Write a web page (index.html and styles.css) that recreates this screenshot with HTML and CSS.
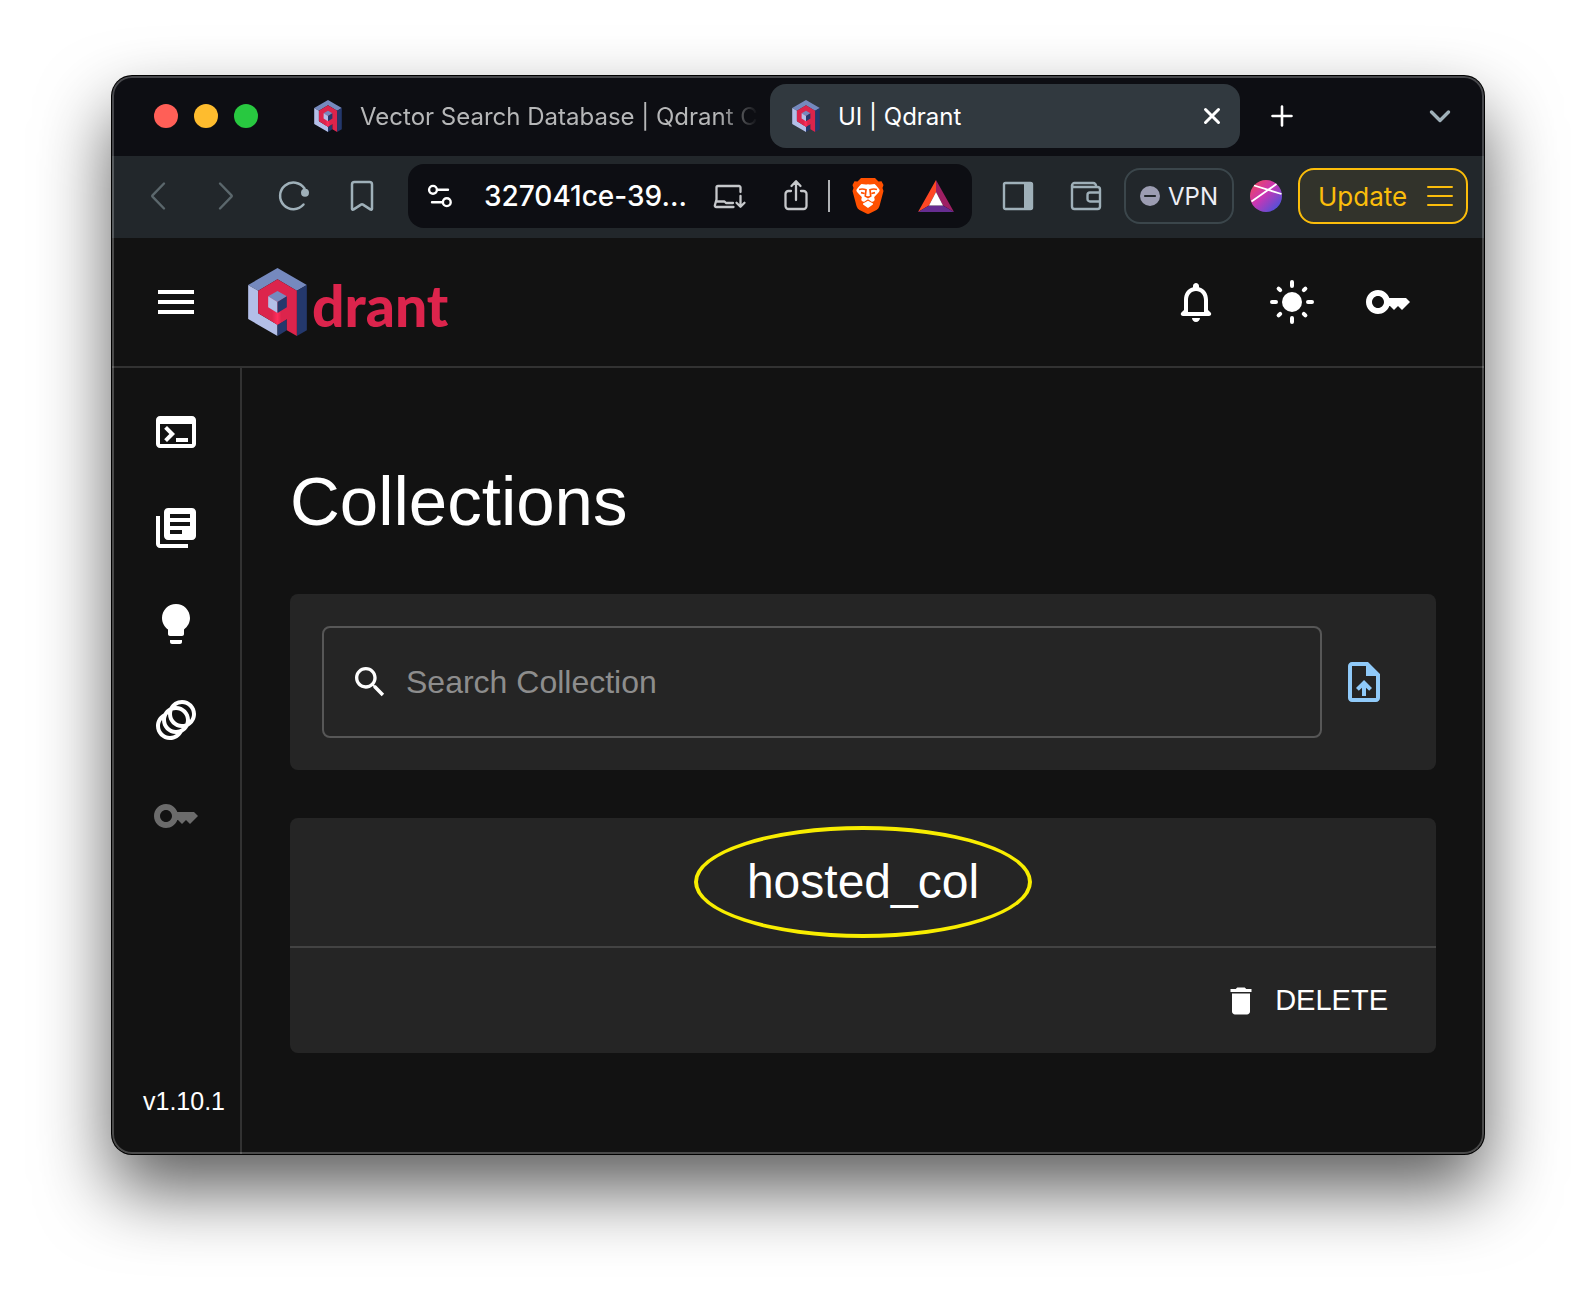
FILE: index.html
```html
<!DOCTYPE html>
<html lang="en">
<head>
<meta charset="utf-8">
<title>UI | Qdrant</title>
<link rel="stylesheet" href="styles.css">
</head>
<body>
<svg class="defs" aria-hidden="true">
  <defs>
    <linearGradient id="glow" x1="0" x2="1" y1="0" y2="0">
      <stop offset="0.2" stop-color="#dc244c"/>
      <stop offset="0.5" stop-color="#ff2e5c"/>
      <stop offset="0.7" stop-color="#dc244c"/>
    </linearGradient>
    <linearGradient id="orb" x1="0" x2="1" y1="0" y2="1">
      <stop offset="0.05" stop-color="#f0475c"/>
      <stop offset="0.45" stop-color="#c936b4"/>
      <stop offset="0.95" stop-color="#3b56e0"/>
    </linearGradient>
    <symbol id="cube" viewBox="0 0 176 204">
      <path fill="#7589be" d="M88 0 176 51 146 68 88 34 30 68 0 51z"/>
      <path fill="#b3bfe8" d="M0 51 30 68V136L88 170V204L0 153z"/>
      <path fill="#24386c" d="M176 51V187L146 204V68z"/>
      <path fill="#24386c" d="M88 170 116 153V187L88 204z"/>
      <path fill="#dc244c" d="M88 34 146 68V204L116 187V153L88 170 30 136V68z"/>
      <path fill="url(#glow)" d="M60 118 88 135 116 118V153L88 170 60 153z"/>
      <path fill="#7589be" d="M88 69 116 85 88 102 60 85z"/>
      <path fill="#b3bfe8" d="M60 85 88 102V135L60 118z"/>
      <path fill="#24386c" d="M116 85 88 102V135L116 118z"/>
    </symbol>
    <symbol id="key" viewBox="0 0 24 24">
      <path d="M21 10h-8.35C11.83 7.67 9.61 6 7 6c-3.31 0-6 2.69-6 6s2.69 6 6 6c2.61 0 4.83-1.67 5.65-4H13l2 2 2-2 2 2 4-4.04zM7 15c-1.65 0-3-1.35-3-3s1.35-3 3-3 3 1.35 3 3-1.35 3-3 3"/>
    </symbol>
  </defs>
</svg>

<div class="window">
  <div class="tabstrip">
    <div class="lights">
      <button class="light light-close" aria-label="Close window"></button>
      <button class="light light-min" aria-label="Minimize window"></button>
      <button class="light light-max" aria-label="Zoom window"></button>
    </div>
    <div class="tabs">
      <div class="tab">
        <svg class="favicon"><use href="#cube"/></svg>
        <span class="tab-title tab-title-fade">Vector Search Database | Qdrant C</span>
      </div>
      <div class="tab tab-active">
        <svg class="favicon"><use href="#cube"/></svg>
        <span class="tab-title">UI | Qdrant</span>
        <button class="tab-close" aria-label="Close tab">
          <svg width="32" height="32" viewBox="0 0 32 32" fill="none" stroke="#fff" stroke-width="3" stroke-linecap="round"><path d="M9.500 9.500 22.500 22.500M22.500 9.500 9.500 22.500"/></svg>
        </button>
      </div>
    </div>
    <button class="strip-button" aria-label="New tab">
      <svg width="32" height="32" viewBox="0 0 32 32" fill="none" stroke="#fff" stroke-width="2.600" stroke-linecap="round"><path d="M16 6.500v19M6.500 16h19"/></svg>
    </button>
    <button class="strip-button strip-end" aria-label="Search tabs">
      <svg width="32" height="32" viewBox="0 0 32 32" fill="none" stroke="#9fb0b9" stroke-width="3.400" stroke-linecap="round" stroke-linejoin="round"><path d="M7.500 12 16 20.500 24.500 12"/></svg>
    </button>
  </div>

  <div class="toolbar">
    <div class="nav">
      <button class="tool" aria-label="Back">
        <svg width="32" height="32" viewBox="0 0 32 32" fill="none" stroke="#5b676c" stroke-width="2.400" stroke-linecap="round" stroke-linejoin="round"><path d="M22 3.500 10.500 15.300a1 1 0 0 0 0 1.400L22 28.500"/></svg>
      </button>
      <button class="tool" aria-label="Forward">
        <svg width="32" height="32" viewBox="0 0 32 32" fill="none" stroke="#5b676c" stroke-width="2.400" stroke-linecap="round" stroke-linejoin="round"><path d="M10 3.500 21.500 15.300a1 1 0 0 1 0 1.400L10 28.500"/></svg>
      </button>
      <button class="tool" aria-label="Reload">
        <svg width="32" height="32" viewBox="0 0 32 32" fill="none" stroke="#9fb0b9" stroke-width="2.500" stroke-linecap="round"><path d="M25.500 24.500A13.300 13.300 0 1 1 26.500 8.500"/><circle cx="27" cy="12.700" r="4" fill="#9fb0b9" stroke="none"/></svg>
      </button>
      <button class="tool" aria-label="Bookmark this page">
        <svg width="32" height="32" viewBox="0 0 32 32" fill="none" stroke="#9fb0b9" stroke-width="2.500" stroke-linejoin="round"><path d="M6 4.500a2.400 2.400 0 0 1 2.400-2.400h15.200A2.400 2.400 0 0 1 26 4.500V29a.8.8 0 0 1-1.300.6L17 24.600a1.800 1.800 0 0 0-2 0L7.300 29.600A.8.8 0 0 1 6 29z"/></svg>
      </button>
    </div>

    <div class="address">
      <button class="tool" aria-label="Site settings">
        <svg width="32" height="32" viewBox="0 0 32 32" fill="none" stroke="#fff" stroke-width="2.400" stroke-linecap="round"><circle cx="9" cy="9.800" r="3.900"/><path d="M13.500 9.800H24M8 22.200h10"/><circle cx="22.800" cy="22.200" r="3.900"/></svg>
      </button>
      <input class="url" type="text" aria-label="Address" value="327041ce-39..." readonly>
      <button class="tool" aria-label="Install app">
        <svg width="32" height="32" viewBox="0 0 32 32" fill="none" stroke="#c6c8cb" stroke-width="2.300" stroke-linejoin="round" stroke-linecap="round"><path d="M2.500 19.500V7.500A1.500 1.500 0 0 1 4 6h21A1.500 1.500 0 0 1 26.500 7.500V12M2.500 19.500 .8 25.500a1.300 1.300 0 0 0 1.300 1.500H19.500M2.500 21.500h8l1.500 1.500h7M26.500 16v10.500M22.500 22.700l4 4 4-4"/></svg>
      </button>
      <button class="tool tool-share" aria-label="Share">
        <svg width="32" height="32" viewBox="0 0 32 32" fill="none" stroke="#c6c8cb" stroke-width="2.300" stroke-linejoin="round" stroke-linecap="round"><path d="M11 11H8.500a3 3 0 0 0-3 3v12a3 3 0 0 0 3 3h15a3 3 0 0 0 3-3V14a3 3 0 0 0-3-3H21M16 20V1.500M11.500 6 16 1.200 20.500 6"/></svg>
      </button>
      <div class="shields">
        <button class="tool" aria-label="Brave Shields">
          <svg width="32" height="36" viewBox="0 0 32 36"><path fill="#ff5000" d="M9 0h14l3.500 3.500 3-.3L31.500 7l-1 3 1 3-4 15c-.6 2-1.700 3-3 4L17.500 35.600a3 3 0 0 1-3 0L7.500 32c-1.300-1-2.400-2-3-4L.5 13l1-3-1-3 2-3.800 3 .3z"/><path fill="#fff" d="M9.500 6c2 .2 4 .9 6.500.2 2.500.7 4.500 0 6.500-.2 1.500 1 3.500 3.500 5 5.800.3 1-.3 1.900-1 2.700l-4 4.200c-.5.7-.3 1.300.1 2.100.2 1-.1 1.900-.9 2.500-.8.5-1.600.5-2.400.1L16.500 21.500h-1l-2.800 1.900c-.8.4-1.600.4-2.400-.1-.8-.6-1.100-1.500-.9-2.500.4-.8.600-1.400.1-2.100l-4-4.200c-.7-.8-1.300-1.700-1-2.700C6 9.500 8 7 9.500 6zM16 22.800l5 2.800c.2.500 0 .8-.4 1.100L16 30l-4.600-3.300c-.4-.3-.6-.6-.4-1.100z"/><path fill="none" stroke="#ff5000" stroke-width="1.700" d="M7 11.500c2.500-.8 4.800-.6 7 .3l-.7 6.200L16 19.500l2.700-1.500-.7-6.200c2.200-.9 4.500-1.100 7-.3M9 14.700l3.500.8M23 14.700l-3.500.8"/></svg>
        </button>
        <button class="tool" aria-label="Brave Rewards">
          <svg width="36" height="32" viewBox="0 0 36 32"><path fill="#ff4724" d="M18 0v12L11 25.500 0 32z"/><path fill="#9e1f63" d="M18 0v12l7 13.500L36 32z"/><path fill="#662d91" d="M0 32 11 25.500h14L36 32z"/><path fill="#fff" d="M18 12l7 13.500H11z"/></svg>
        </button>
      </div>
    </div>

    <div class="side-tools">
      <button class="tool" aria-label="Show sidebar">
        <svg width="32" height="32" viewBox="0 0 32 32"><rect x="2" y="3" width="28" height="26" rx="1.500" fill="none" stroke="#9fb0b9" stroke-width="2.400"/><path fill="#9fb0b9" d="M22 3h8v26h-8z"/></svg>
      </button>
      <button class="tool" aria-label="Wallet">
        <svg width="32" height="32" viewBox="0 0 32 32" fill="none" stroke="#9fb0b9" stroke-width="2.400" stroke-linejoin="round"><path d="M30 12.500V9.500A2.500 2.500 0 0 0 27.500 7H4.500A2.500 2.500 0 0 1 2 5.500 2.500 2.500 0 0 1 4.500 3H23a3 3 0 0 1 3 3.500M2 5v21.500A2.500 2.500 0 0 0 4.500 29h23a2.500 2.500 0 0 0 2.500-2.500V12.500H20a2.500 2.500 0 0 0-2.500 2.500v4a2.500 2.500 0 0 0 2.500 2.500h10"/></svg>
      </button>
    </div>
    <div class="account-tools">
      <button class="vpn">
        <svg width="20" height="20" viewBox="0 0 20 20"><circle cx="10" cy="10" r="10" fill="#9c9db2"/><path stroke="#22272b" stroke-width="2.200" stroke-linecap="round" d="M5 10h10"/></svg>
        VPN
      </button>
      <button class="tool" aria-label="Leo AI">
        <svg width="32" height="32" viewBox="0 0 32 32"><circle cx="16" cy="16" r="16" fill="url(#orb)"/><path stroke="#fff" stroke-width="1.800" d="M4 5.500 31.500 14M1.500 21.500 26.500 4"/></svg>
      </button>
      <button class="update">
        Update
        <svg width="28" height="20" viewBox="0 0 28 20" stroke="#fbbd0b" stroke-width="2" stroke-linecap="round"><path d="M2 1h24M2 10h24M2 19h24"/></svg>
      </button>
    </div>
  </div>

  <header class="app-header">
    <button class="icon-button" aria-label="Open menu">
      <svg class="icon" viewBox="0 0 24 24"><path d="M3 18h18v-2H3zm0-5h18v-2H3zm0-7v2h18V6z"/></svg>
    </button>
    <a class="logo" href="#">
      <svg class="logo-mark" aria-hidden="true"><use href="#cube"/></svg>
      <span class="logo-text">drant</span>
    </a>
    <div class="header-actions">
      <button class="icon-button" aria-label="Notifications">
        <svg class="icon" viewBox="0 0 24 24"><path d="M19.290 17.290 18 16v-5c0-3.070-1.640-5.640-4.500-6.320V4c0-.83-.67-1.500-1.500-1.500s-1.500.67-1.500 1.500v.68C7.630 5.360 6 7.920 6 11v5l-1.290 1.290c-.63.63-.19 1.710.7 1.710h13.170c.9 0 1.340-1.080.71-1.710M16 17H8v-6c0-2.480 1.510-4.500 4-4.500s4 2.020 4 4.500zm-4 5c1.100 0 2-.9 2-2h-4c0 1.100.89 2 2 2"/></svg>
      </button>
      <button class="icon-button" aria-label="Switch theme">
        <svg class="icon" viewBox="0 0 24 24"><circle cx="12" cy="12" r="5"/><path fill="none" stroke="#fff" stroke-width="2" stroke-linecap="round" d="M2 12h2M20 12h2M12 2v2M12 20v2M5.300 5.300l.8.8M17.900 17.900l.8.8M18.700 5.300l-.8.8M6.100 17.900l-.8.8"/></svg>
      </button>
      <button class="icon-button" aria-label="API key">
        <svg class="icon"><use href="#key"/></svg>
      </button>
    </div>
  </header>

  <div class="app-body">
    <nav class="sidebar">
      <a href="#" aria-label="Console"><svg class="icon" viewBox="0 0 24 24"><path d="M20 4H4c-1.110 0-2 .9-2 2v12c0 1.100.89 2 2 2h16c1.100 0 2-.9 2-2V6c0-1.100-.89-2-2-2m0 14H4V8h16zm-2-1h-6v-2h6zM7.500 17l-1.410-1.410L8.670 13l-2.590-2.590L7.500 9l4 4z"/></svg></a>
      <a href="#" aria-label="Collections"><svg class="icon" viewBox="0 0 24 24"><path d="M4 6H2v14c0 1.100.9 2 2 2h14v-2H4zm16-4H8c-1.100 0-2 .9-2 2v12c0 1.100.9 2 2 2h12c1.100 0 2-.9 2-2V4c0-1.100-.9-2-2-2m-1 9H9V9h10zm-4 4H9v-2h6zm4-8H9V5h10z"/></svg></a>
      <a href="#" aria-label="Tutorial"><svg class="icon" viewBox="0 0 24 24"><path d="M9 21c0 .5.4 1 1 1h4c.6 0 1-.5 1-1v-1H9zm3-19C8.100 2 5 5.100 5 9c0 2.400 1.200 4.500 3 5.700V17c0 .5.4 1 1 1h6c.6 0 1-.5 1-1v-2.300c1.800-1.300 3-3.400 3-5.700 0-3.900-3.100-7-7-7"/></svg></a>
      <a href="#" aria-label="Datasets"><svg class="icon" viewBox="0 0 24 24"><path d="M15 2c-2.710 0-5.050 1.540-6.220 3.780-1.280.67-2.340 1.720-3 3C3.540 9.950 2 12.290 2 15c0 3.870 3.130 7 7 7 2.710 0 5.050-1.540 6.220-3.780 1.280-.67 2.340-1.720 3-3C20.460 14.050 22 11.710 22 9c0-3.870-3.130-7-7-7M9 20c-2.760 0-5-2.240-5-5 0-1.120.37-2.160 1-3 0 3.870 3.130 7 7 7-.84.63-1.880 1-3 1m3-3c-2.760 0-5-2.240-5-5 0-1.120.37-2.160 1-3 0 3.860 3.130 6.990 7 7-.84.63-1.880 1-3 1m4.700-3.300c-.53.19-1.100.3-1.700.3-2.760 0-5-2.240-5-5 0-.6.11-1.170.3-1.700.53-.19 1.100-.3 1.700-.3 2.760 0 5 2.240 5 5 0 .6-.11 1.170-.3 1.700M19 12c0-3.860-3.130-6.990-7-7 .84-.63 1.870-1 3-1 2.760 0 5 2.240 5 5 0 1.120-.37 2.160-1 3"/></svg></a>
      <a class="disabled" href="#" aria-label="Access tokens" aria-disabled="true"><svg class="icon"><use href="#key"/></svg></a>
      <span class="version">v1.10.1</span>
    </nav>

    <main class="main">
      <h1 class="title">Collections</h1>

      <section class="card search-card">
        <label class="search">
          <svg class="search-icon" viewBox="0 0 24 24" aria-hidden="true"><path d="M15.500 14h-.79l-.28-.27C15.410 12.590 16 11.110 16 9.500 16 5.910 13.090 3 9.500 3S3 5.910 3 9.500 5.910 16 9.500 16c1.610 0 3.090-.59 4.230-1.570l.27.28v.79l5 4.990L20.490 19zm-6 0C7.010 14 5 11.990 5 9.500S7.010 5 9.500 5 14 7.010 14 9.500 11.990 14 9.500 14"/></svg>
          <input class="search-input" type="text" placeholder="Search Collection" aria-label="Search Collection">
        </label>
        <button class="upload" aria-label="Upload snapshot">
          <svg class="icon" viewBox="0 0 24 24"><path d="M14 2H6c-1.100 0-1.990.9-1.990 2L4 20c0 1.100.89 2 1.990 2H18c1.100 0 2-.9 2-2V8zm4 18H6V4h7v5h5zM8 15.010l1.410 1.410L11 14.840V19h2v-4.160l1.590 1.590L16 15.010 12.010 11z"/></svg>
        </button>
      </section>

      <section class="card">
        <div class="collection-head">
          <a class="collection-name" href="#">hosted_col</a>
        </div>
        <div class="collection-actions">
          <button class="delete">
            <svg width="36" height="36" viewBox="0 0 24 24" aria-hidden="true"><path d="M6 19c0 1.100.9 2 2 2h8c1.100 0 2-.9 2-2V7H6zM19 4h-3.500l-1-1h-5l-1 1H5v2h14z"/></svg>
            DELETE
          </button>
        </div>
      </section>
    </main>
  </div>
</div>
</body>
</html>
```
FILE: styles.css
```css
*,
*::before,
*::after {
  box-sizing: border-box;
}

body {
  margin: 0;
  padding: 76px 112px 148px;
  background: #fff;
  color: #fff;
  font-family: "Liberation Sans", Arial, sans-serif;
}

button,
input {
  margin: 0;
  padding: 0;
  border: 0;
  background: none;
  color: inherit;
  font: inherit;
}

a {
  color: inherit;
  text-decoration: none;
}

svg {
  display: block;
  flex: none;
  overflow: visible;
}

.defs {
  position: absolute;
  width: 0;
  height: 0;
}

.window {
  position: relative;
  display: flex;
  flex-direction: column;
  min-height: calc(100vh - 224px);
  overflow: hidden;
  border-radius: 20px;
  background: #121212;
  box-shadow: 0 0 0 1px #000, 0 36px 72px rgba(0, 0, 0, 0.64);
}

/* light rim drawn just inside the window edge */
.window::after {
  content: "";
  position: absolute;
  inset: 0;
  border-radius: 20px;
  box-shadow: inset 0 0 0 2px rgba(255, 255, 255, 0.24);
  pointer-events: none;
}

/* Tab strip */

.tabstrip {
  display: flex;
  align-items: center;
  height: 80px;
  padding: 0 20px 0 42px;
  background: #0d0e13;
  font-family: Inter, sans-serif;
  font-size: 24px;
}

.lights {
  display: flex;
  gap: 16px;
  margin-right: 34px;
}

.light {
  width: 24px;
  height: 24px;
  border-radius: 50%;
}

.light-close { background: #ff5f57; }
.light-min { background: #febc2e; }
.light-max { background: #28c840; }

.tabs {
  display: flex;
  flex: 0 1 948px;
  gap: 8px;
  min-width: 0;
}

.tab {
  display: flex;
  flex: 1 1 0;
  align-items: center;
  gap: 18px;
  min-width: 0;
  height: 64px;
  padding: 0 12px 0 22px;
  border-radius: 16px;
  color: #b6b7b8;
}

.tab-active {
  background: #31393f;
  color: #fff;
}

.favicon {
  width: 28px;
  height: 32px;
}

.tab-title {
  flex: 1;
  white-space: nowrap;
}

.tab-title-fade {
  mask-image: linear-gradient(to right, #000 90%, transparent);
}

.strip-button {
  display: grid;
  place-items: center;
  width: 48px;
  height: 48px;
  margin-left: 18px;
}

.strip-end {
  margin-left: auto;
}

/* Toolbar */

.toolbar {
  display: flex;
  align-items: center;
  height: 82px;
  padding: 0 16px 2px 30px;
  background: #22272b;
  font-family: Inter, sans-serif;
}

.tool {
  display: grid;
  flex: none;
  place-items: center;
}

.nav {
  display: flex;
  gap: 36px;
}

.address {
  display: flex;
  flex: 1;
  align-items: center;
  min-width: 0;
  height: 64px;
  margin: 0 30px;
  padding: 0 18px 0 16px;
  border-radius: 16px;
  background: #0d0e13;
}

.url {
  flex: 1;
  min-width: 0;
  margin: 0 28px;
  font-size: 28px;
  font-weight: 500;
}

.tool-share {
  margin-left: 34px;
}

.shields {
  display: flex;
  align-items: center;
  gap: 34px;
  height: 32px;
  margin-left: 16px;
  padding-left: 22px;
  border-left: 2px solid #b0b2b5;
}

.side-tools {
  display: flex;
  gap: 36px;
}

.account-tools {
  display: flex;
  align-items: center;
  gap: 16px;
  margin-left: 22px;
}

.vpn,
.update {
  display: flex;
  align-items: center;
  height: 56px;
  border: 2px solid #3b464b;
  border-radius: 16px;
}

.vpn {
  gap: 8px;
  width: 110px;
  padding: 0 14px;
  color: #edeef5;
  font-size: 24px;
}

.update {
  justify-content: space-between;
  width: 170px;
  padding: 0 12px 0 18px;
  border-color: #fbbd0b;
  background: #32332b;
  color: #fbbd0b;
  font-size: 26px;
}

/* App header */

.app-header {
  display: flex;
  align-items: center;
  height: 130px;
  padding: 0 72px 0 40px;
  border-bottom: 2px solid #323232;
}

.icon {
  width: 48px;
  height: 48px;
  fill: currentColor;
}

.logo {
  display: flex;
  align-items: flex-end;
  gap: 5px;
  margin-left: 48px;
}

.logo-mark {
  width: 59px;
  height: 68px;
}

.logo-text {
  color: #dc244c;
  font-family: Lato, sans-serif;
  font-size: 57px;
  font-weight: 900;
  line-height: 62px;
}

.header-actions {
  display: flex;
  gap: 48px;
  margin-left: auto;
}

/* App body */

.app-body {
  display: flex;
  flex: 1;
}

.sidebar {
  display: flex;
  flex: none;
  flex-direction: column;
  align-items: center;
  gap: 48px;
  width: 130px;
  padding: 40px 0;
  border-right: 2px solid #323232;
}

.disabled {
  color: #6b6b6b;
}

.version {
  margin-top: auto;
  padding-left: 16px;
  font-size: 25px;
  line-height: 26px;
}

.main {
  flex: 1;
  min-width: 0;
  padding: 92px 48px 48px;
}

.title {
  margin: 0 0 50px;
  font-size: 69px;
  font-weight: 400;
  line-height: 84px;
}

.card {
  border-radius: 8px;
  background: #252525;
}

.search-card {
  display: flex;
  align-items: center;
  gap: 2px;
  margin-bottom: 48px;
  padding: 32px;
}

.search {
  display: flex;
  flex: 1;
  align-items: center;
  gap: 16px;
  min-width: 0;
  height: 112px;
  padding: 0 26px;
  border: 2px solid #575757;
  border-radius: 8px;
}

.search-icon {
  width: 40px;
  height: 40px;
  fill: #fff;
}

.search-input {
  flex: 1;
  min-width: 0;
  font-size: 32px;
}

.search-input::placeholder {
  color: #8d8d8d;
  opacity: 1;
}

.upload {
  padding: 16px;
  color: #90caf9;
}

.collection-head {
  display: flex;
  justify-content: center;
  padding: 32px;
  border-bottom: 2px solid #434343;
}

.collection-name {
  position: relative;
  font-size: 48px;
  line-height: 64px;
}

/* hand-marked ring around the collection name */
.collection-name::after {
  content: "";
  position: absolute;
  inset: -24px -53px;
  border: 4px solid #f8ed00;
  border-radius: 50%;
}

.collection-actions {
  display: flex;
  justify-content: flex-end;
  padding: 16px 48px;
}

.delete {
  display: flex;
  align-items: center;
  gap: 16px;
  height: 73px;
  font-size: 29px;
}

.delete svg {
  fill: currentColor;
}
```
